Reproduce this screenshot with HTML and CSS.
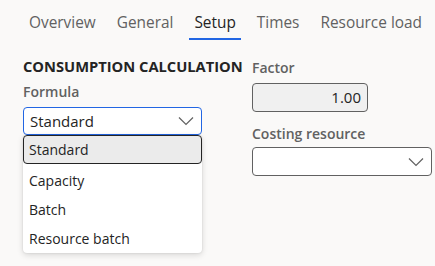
FILE: index.html
```html
<!DOCTYPE html>
<html lang="en">

<head>
    <meta charset="UTF-8">
    <meta name="viewport" content="width=device-width, initial-scale=1.0">
    <title>Setup</title>
    <link rel="stylesheet" href="styles.css">
</head>

<body>
    <nav class="tabs">
        <span class="tab">Overview</span>
        <span class="tab">General</span>
        <span class="tab active">Setup</span>
        <span class="tab">Times</span>
        <span class="tab">Resource load</span>
    </nav>

    <main class="setup">
        <section class="col-left">
            <h2 class="group-title">CONSUMPTION CALCULATION</h2>
            <label class="field-label">Formula</label>
            <div class="combo">
                <div class="select focused">
                    <span>Standard</span>
                    <svg class="chevron" width="16" height="10" viewBox="0 0 16 10">
                        <path d="M1 1.5 L8 8.5 L15 1.5" fill="none" stroke="#616161" stroke-width="1.2" />
                    </svg>
                </div>
                <ul class="listbox">
                    <li class="option selected">Standard</li>
                    <li class="option">Capacity</li>
                    <li class="option">Batch</li>
                    <li class="option">Resource batch</li>
                </ul>
            </div>
        </section>

        <section class="col-right">
            <label class="field-label">Factor</label>
            <div class="input readonly">1.00</div>
            <label class="field-label second">Costing resource</label>
            <div class="select wide">
                <span></span>
                <svg class="chevron" width="16" height="10" viewBox="0 0 16 10">
                    <path d="M1 1.5 L8 8.5 L15 1.5" fill="none" stroke="#616161" stroke-width="1.2" />
                </svg>
            </div>
        </section>
    </main>
</body>

</html>
```

FILE: styles.css
```css
* {
    box-sizing: border-box;
}

html,
body {
    height: 100%;
}

body {
    margin: 0px;
    padding: 0px;
    background-color: #faf9f8;
    font-family: "Open Sans", "Noto Sans", sans-serif;
    color: #242424;
}

.tabs {
    display: flex;
    gap: 11px;
    padding: 10px 0 0 24px;
}

.tab {
    padding: 0 5px;
    height: 30px;
    line-height: 26px;
    font-size: 15.4px;
    color: #616161;
    border-bottom: 2px solid transparent;
}

.tab.active {
    color: #242424;
    border-bottom-color: #2266e3;
}

.setup {
    display: grid;
    grid-template-columns: 219px 180px;
    column-gap: 10px;
    padding: 15px 0 0 23px;
}

.group-title {
    margin: 0;
    font-size: 14.7px;
    font-weight: 700;
    line-height: 22px;
    white-space: nowrap;
}

.field-label {
    display: block;
    font-size: 14px;
    font-weight: 600;
    color: #616161;
    line-height: 20px;
    margin-top: 5px;
    margin-bottom: 5px;
}

.field-label.second {
    margin-top: 12px;
    margin-bottom: 3px;
}

.combo {
    position: relative;
    width: 179px;
}

.select {
    display: flex;
    align-items: center;
    justify-content: space-between;
    height: 28px;
    padding: 0 7px 0 6px;
    background-color: #fff;
    border: 1px solid #616161;
    border-radius: 4px;
    font-size: 15px;
}

.select.focused {
    border-color: #2266e3;
}

.select.wide {
    width: 180px;
    height: 29px;
}

.chevron {
    display: block;
}

.listbox {
    position: absolute;
    top: 28px;
    left: 0;
    width: 179px;
    margin: 0;
    padding: 0;
    list-style: none;
    background-color: #fff;
    border-radius: 4px;
    box-shadow: 0 2px 6px rgba(0, 0, 0, 0.14), 0 0 2px rgba(0, 0, 0, 0.12);
}

.option {
    height: 29px;
    line-height: 27px;
    padding: 0 5px;
    font-size: 14px;
    border: 1px solid transparent;
}

.option.selected {
    margin-bottom: 2px;
    background-color: #ebebeb;
    border-color: #242424;
    border-radius: 4px;
}

.col-right {
    padding-top: 3px;
}

.col-right .field-label:first-child {
    margin-top: 0;
}

.input {
    width: 116px;
    height: 29px;
    border: 1px solid #616161;
    border-radius: 4px;
    padding: 0 6px;
    text-align: right;
    font-size: 15px;
    line-height: 27px;
}

.input.readonly {
    background-color: #f0f0f0;
}
```
